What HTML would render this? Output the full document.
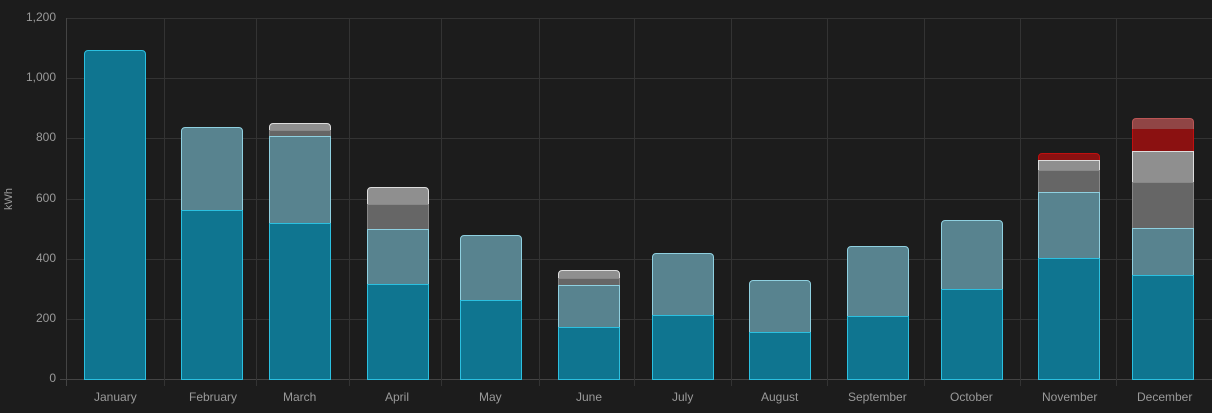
<!DOCTYPE html><html><head><style>
body{margin:0;background:#1c1c1c;width:1212px;height:413px;overflow:hidden;font-family:"Liberation Sans",sans-serif;position:relative}
.g{position:absolute;background:#333}
.t{position:absolute;color:#9a9a9a;font-size:12px}
.yl{right:1156px;text-align:right;width:50px}
.b{position:absolute;box-sizing:border-box;width:62px}
.d{background:#0f7590;border:1px solid #2bc0e0}
.l{background:#58838f;border:1px solid #8fd0e0}
.dg{background:#666;border:1px solid #888}
.lg{background:#8f8f8f;border:1px solid #ddd}
.r{background:#8b1111;border:1px solid #c01010}
.lr{background:#904545;border:1px solid #b55}
.top{border-radius:4px 4px 0 0}
</style></head><body>
<div class="g" style="left:66px;top:18px;width:1146px;height:1px"></div>
<div class="g" style="left:66px;top:78px;width:1146px;height:1px"></div>
<div class="g" style="left:66px;top:138px;width:1146px;height:1px"></div>
<div class="g" style="left:66px;top:199px;width:1146px;height:1px"></div>
<div class="g" style="left:66px;top:259px;width:1146px;height:1px"></div>
<div class="g" style="left:66px;top:319px;width:1146px;height:1px"></div>
<div class="g" style="left:60px;top:379px;width:1152px;height:1px;background:#444"></div>
<div class="g" style="left:66px;top:18px;width:1px;height:368px;background:#444"></div>
<div class="g" style="left:164px;top:18px;width:1px;height:368px"></div>
<div class="g" style="left:256px;top:18px;width:1px;height:368px"></div>
<div class="g" style="left:349px;top:18px;width:1px;height:368px"></div>
<div class="g" style="left:441px;top:18px;width:1px;height:368px"></div>
<div class="g" style="left:539px;top:18px;width:1px;height:368px"></div>
<div class="g" style="left:634px;top:18px;width:1px;height:368px"></div>
<div class="g" style="left:731px;top:18px;width:1px;height:368px"></div>
<div class="g" style="left:827px;top:18px;width:1px;height:368px"></div>
<div class="g" style="left:924px;top:18px;width:1px;height:368px"></div>
<div class="g" style="left:1020px;top:18px;width:1px;height:368px"></div>
<div class="g" style="left:1116px;top:18px;width:1px;height:368px"></div>

<div class="t yl" style="top:10px">1,200</div>
<div class="t yl" style="top:70px">1,000</div>
<div class="t yl" style="top:130px">800</div>
<div class="t yl" style="top:191px">600</div>
<div class="t yl" style="top:251px">400</div>
<div class="t yl" style="top:311px">200</div>
<div class="t yl" style="top:371px">0</div>
<div class="t" style="left:-2px;top:193px;transform:rotate(-90deg);font-size:11px">kWh</div>

<div class="t" style="left:94px;top:390px">January</div>
<div class="t" style="left:189px;top:390px">February</div>
<div class="t" style="left:283px;top:390px">March</div>
<div class="t" style="left:385px;top:390px">April</div>
<div class="t" style="left:479px;top:390px">May</div>
<div class="t" style="left:576px;top:390px">June</div>
<div class="t" style="left:672px;top:390px">July</div>
<div class="t" style="left:761px;top:390px">August</div>
<div class="t" style="left:848px;top:390px">September</div>
<div class="t" style="left:950px;top:390px">October</div>
<div class="t" style="left:1042px;top:390px">November</div>
<div class="t" style="left:1137px;top:390px">December</div>

<!-- Jan -->
<div class="b d top" style="left:84px;top:50px;height:330px"></div>
<!-- Feb -->
<div class="b l top" style="left:181px;top:127px;height:84px"></div>
<div class="b d" style="left:181px;top:210px;height:170px"></div>
<!-- Mar -->
<div class="b lg top" style="left:269px;top:123px;height:8px"></div>
<div class="b dg" style="left:269px;top:130px;height:7px"></div>
<div class="b l" style="left:269px;top:136px;height:88px"></div>
<div class="b d" style="left:269px;top:223px;height:157px"></div>
<!-- Apr -->
<div class="b lg top" style="left:367px;top:187px;height:18px"></div>
<div class="b dg" style="left:367px;top:204px;height:26px"></div>
<div class="b l" style="left:367px;top:229px;height:56px"></div>
<div class="b d" style="left:367px;top:284px;height:96px"></div>
<!-- May -->
<div class="b l top" style="left:460px;top:235px;height:66px"></div>
<div class="b d" style="left:460px;top:300px;height:80px"></div>
<!-- Jun -->
<div class="b lg top" style="left:558px;top:270px;height:9px"></div>
<div class="b dg" style="left:558px;top:278px;height:8px"></div>
<div class="b l" style="left:558px;top:285px;height:43px"></div>
<div class="b d" style="left:558px;top:327px;height:53px"></div>
<!-- Jul -->
<div class="b l top" style="left:652px;top:253px;height:63px"></div>
<div class="b d" style="left:652px;top:315px;height:65px"></div>
<!-- Aug -->
<div class="b l top" style="left:749px;top:280px;height:53px"></div>
<div class="b d" style="left:749px;top:332px;height:48px"></div>
<!-- Sep -->
<div class="b l top" style="left:847px;top:246px;height:71px"></div>
<div class="b d" style="left:847px;top:316px;height:64px"></div>
<!-- Oct -->
<div class="b l top" style="left:941px;top:220px;height:70px"></div>
<div class="b d" style="left:941px;top:289px;height:91px"></div>
<!-- Nov -->
<div class="b r top" style="left:1038px;top:153px;height:8px"></div>
<div class="b lg" style="left:1038px;top:160px;height:11px"></div>
<div class="b dg" style="left:1038px;top:170px;height:23px"></div>
<div class="b l" style="left:1038px;top:192px;height:67px"></div>
<div class="b d" style="left:1038px;top:258px;height:122px"></div>
<!-- Dec -->
<div class="b lr top" style="left:1132px;top:118px;height:12px;border-bottom:none"></div>
<div class="b r" style="left:1132px;top:129px;height:23px;border-top:none"></div>
<div class="b lg" style="left:1132px;top:151px;height:32px"></div>
<div class="b dg" style="left:1132px;top:182px;height:47px"></div>
<div class="b l" style="left:1132px;top:228px;height:48px"></div>
<div class="b d" style="left:1132px;top:275px;height:105px"></div>
</body></html>
